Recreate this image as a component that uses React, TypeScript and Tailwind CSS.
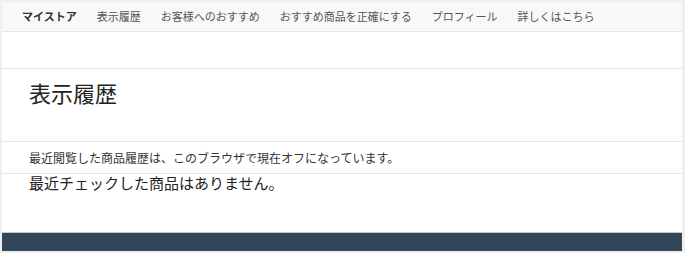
const jp = "font-['Noto_Sans_CJK_JP','Noto_Sans',sans-serif]";

const links = ["表示履歴", "お客様へのおすすめ", "おすすめ商品を正確にする", "プロフィール", "詳しくはこちら"];

export default function App() {
  return (
    <div className={`h-[253px] w-[685px] overflow-hidden bg-[#efefef] pt-[2px] pl-[2px] pr-[3px] ${jp}`}>
      <div className="flex h-[249px] flex-col bg-white">
        {/* Nav */}
        <nav className="flex h-[30px] items-center gap-[20px] border-b border-[#e5e5e5] bg-[#f8f8f8] pl-[20px] text-[11px] text-[#555]">
          <span className="font-bold text-[#333]">マイストア</span>
          {links.map((l) => (
            <span key={l}>{l}</span>
          ))}
        </nav>

        <div className="h-[37px] border-b border-[#e5e5e5]" />

        {/* Heading */}
        <div className="flex h-[73px] items-start border-b border-[#e5e5e5] pl-[27px] pt-[8px]">
          <h1 className="text-[22px] leading-[30px] text-[#222]">表示履歴</h1>
        </div>

        <div className="flex h-[32px] items-center border-b border-[#e5e5e5] pl-[27px] pt-[1px]">
          <p className="text-[12px] text-[#333]">最近閲覧した商品履歴は、このブラウザで現在オフになっています。</p>
        </div>

        <div className="flex-1 pl-[27px]">
          <p className="text-[15px] leading-[18px] text-[#222]">最近チェックした商品はありません。</p>
        </div>

        {/* Footer */}
        <div className="h-[19px] border-t border-[#c8ccd0] bg-[#34465a]" />
      </div>
    </div>
  );
}
